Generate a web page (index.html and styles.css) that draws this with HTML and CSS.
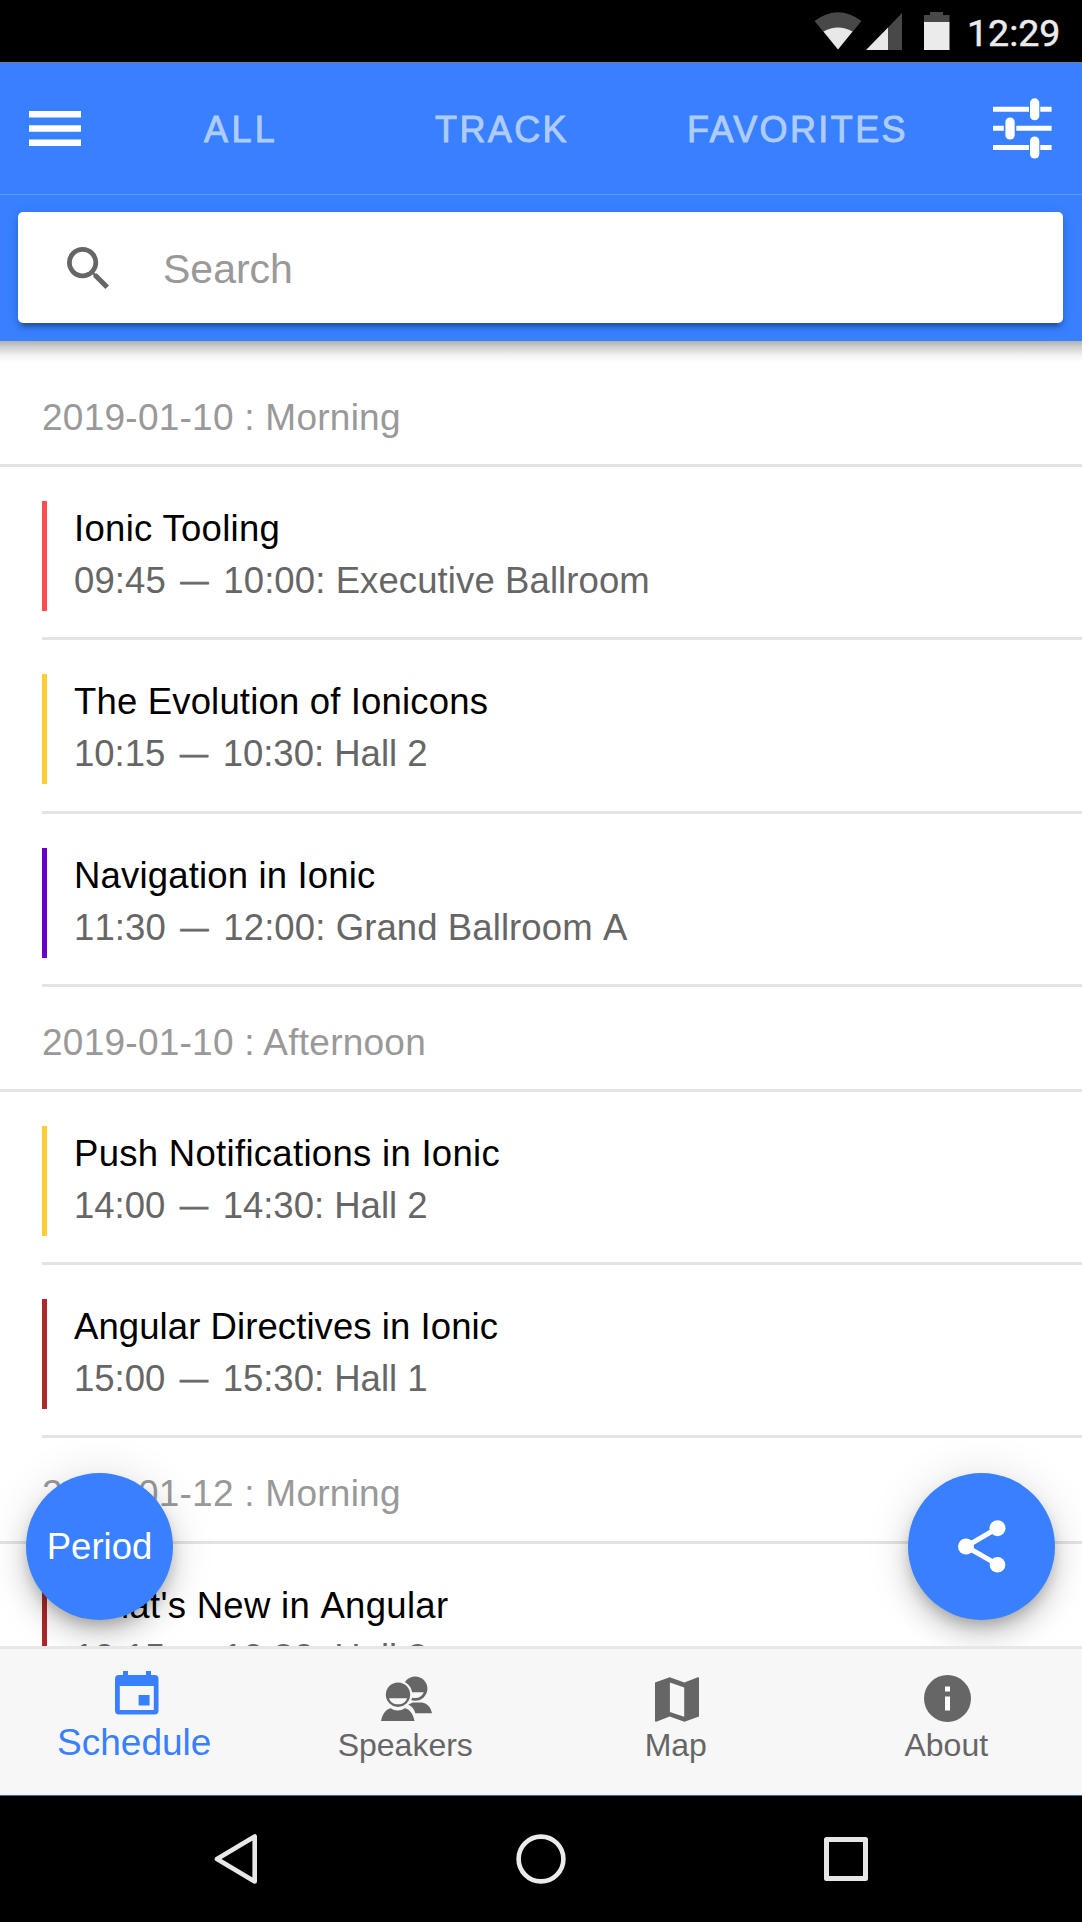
FILE: index.html
```html
<!DOCTYPE html>
<html lang="en">
<head>
<meta charset="utf-8">
<title>Schedule</title>
<link rel="stylesheet" href="styles.css">
</head>
<body>
<div class="phone">
  <div class="status">
    <svg class="status-icons" width="138" height="62" viewBox="814 0 138 62">
      <path fill="#484848" d="M814.500 21Q838 3.500 861.500 21L838 49.500Z"/>
      <path fill="#e8e8e8" d="M823.500 31.500Q838 23.500 852.500 31.500L838 49.500Z"/>
      <path fill="#484848" d="M888 27.500L902 13V50H888Z"/>
      <path fill="#e8e8e8" d="M866 50L888 27.500V50Z"/>
      <path fill="#484848" d="M924 15h6v-3h13v3h6.500v7H924Z"/>
      <path fill="#ebebeb" d="M924 22h25.500v28H924Z"/>
    </svg>
    <span class="clock">12:29</span>
  </div>
  <header class="header">
    <nav class="toolbar">
      <svg class="menu" width="52" height="35" viewBox="0 0 52 35" fill="#fff"><path d="M0 0h52v6.500H0zM0 14.200h52v6.500H0zM0 28.400h52v6.500H0z"/></svg>
      <div class="segments">
        <span class="seg seg-all">ALL</span>
        <span class="seg seg-track">TRACK</span>
        <span class="seg seg-fav">FAVORITES</span>
      </div>
      <svg class="options" width="59" height="61" viewBox="0 0 59 61" fill="#fff">
        <path d="M0 8.700h36v5H0zM47.300 8.700H58.600v5H47.300zM0 27.800h10.800v5H0zM23.300 27.800h35.300v5H23.300zM0 46.900h36v5H0zM47.300 46.900H58.600v5H47.300z"/>
        <rect x="37" y=".3" width="9.300" height="22" rx="4.600"/><rect x="12.400" y="19.500" width="9.300" height="22" rx="4.600"/><rect x="37" y="38.500" width="9.300" height="22" rx="4.600"/>
      </svg>
    </nav>
    <div class="search-bar">
      <div class="search">
        <svg width="42" height="42" viewBox="3 3 17.500 17.500" fill="#666"><path d="M15.500 14h-.79l-.28-.27A6.470 6.470 0 0 0 16 9.500 6.500 6.500 0 1 0 9.500 16c1.610 0 3.090-.59 4.230-1.570l.27.28v.79l5 4.990L20.490 19l-4.990-5zm-6 0a4.500 4.500 0 1 1 0-9 4.500 4.500 0 0 1 0 9z"/></svg>
        <span class="placeholder">Search</span>
      </div>
    </div>
  </header>
  <main class="content">
    <section class="list">
      <h2 class="group">2019-01-10 : Morning</h2>
      <article class="item"><div class="session red"><h3 class="tight">Ionic Tooling</h3><p class="long">09:45 <i>—</i> 10:00: Executive Ballroom</p></div></article>
      <article class="item"><div class="session yellow"><h3>The Evolution of Ionicons</h3><p>10:15 <i>—</i> 10:30: Hall 2</p></div></article>
      <article class="item"><div class="session purple"><h3>Navigation in Ionic</h3><p class="long">11:30 <i>—</i> 12:00: Grand Ballroom A</p></div></article>
      <h2 class="group">2019-01-10 : Afternoon</h2>
      <article class="item"><div class="session yellow"><h3 class="wide">Push Notifications in Ionic</h3><p>14:00 <i>—</i> 14:30: Hall 2</p></div></article>
      <article class="item"><div class="session brown"><h3 class="tight">Angular Directives in Ionic</h3><p>15:00 <i>—</i> 15:30: Hall 1</p></div></article>
      <h2 class="group">2019-01-12 : Morning</h2>
      <article class="item"><div class="session brown"><h3 class="wide">What's New in Angular</h3><p>10:15 <i>—</i> 10:30: Hall 2</p></div></article>
    </section>
    <div class="fab fab-left">Period</div>
    <div class="fab fab-right">
      <svg width="48" height="53" viewBox="0 0 48 53" fill="#fff" stroke="#fff"><path fill="none" stroke-width="5" d="M39.500 8.200L8 26.500l31.500 18.200"/><g stroke="none"><circle cx="8" cy="26.500" r="8"/><circle cx="39.500" cy="8.200" r="8"/><circle cx="39.500" cy="44.700" r="7.800"/></g></svg>
    </div>
  </main>
  <footer class="tabs">
    <div class="tab active">
      <svg width="44" height="44" viewBox="0 0 44 44" fill="#3880ff"><path fill-rule="evenodd" d="M8 0h5v4h18V0h5v4h3.500a4 4 0 0 1 4 4v31.500a4 4 0 0 1-4 4H4a4 4 0 0 1-4-4V8a4 4 0 0 1 4-4h4zM4.800 15v24h34V15zM23.600 24h11v10.500h-11z"/></svg>
      <span>Schedule</span>
    </div>
    <div class="tab">
      <svg width="51" height="46" viewBox="0 0 51 46" fill="#666">
        <circle cx="34.200" cy="12.600" r="12.200"/><path fill="#f7f7f7" d="M24 16.300h18.800c-1.500 3.700-4.500 5.800-8.600 5.800-4 0-8-1-10.200-5.800z"/><path d="M26 37.200V29l6-2.500h9c5.500 1 8.500 4.500 10 10.700z"/>
        <circle cx="17" cy="18.700" r="14.300" fill="#f7f7f7"/><path fill="#f7f7f7" d="M22 31l5-2.500c4.500 2 6.500 5.500 7.500 9.500H26z"/>
        <circle cx="17" cy="18.700" r="12.200"/><path fill="#f7f7f7" d="M8 22.200h18c-1.300 4-4.500 6-9 6s-7.700-2-9-6z"/><path d="M0 45c1.500-7 5-12 10-12.700 2 1.500 4 2.200 6.700 2.200s5-.7 7-2.200C28.700 33 32 38 33.600 45z"/>
      </svg>
      <span>Speakers</span>
    </div>
    <div class="tab">
      <svg width="44" height="45" viewBox="0 0 44 45" fill="#666"><path fill-rule="evenodd" d="M14.700.3L0 5.400V44q0 1 1.200.8l13.500-5.200 14.700 5.100L44 39.600V1q0-1-1.200-.8L29.400 5.400zM14.900 5.600v29.300l14.300 4.900V10.500z"/></svg>
      <span>Map</span>
    </div>
    <div class="tab">
      <svg width="47" height="47" viewBox="0 0 47 47"><circle cx="23.500" cy="23.500" r="23.500" fill="#666"/><path fill="#fff" d="M21 11.500h5v5h-5zM21 21.500h5V35.500h-5z"/></svg>
      <span>About</span>
    </div>
  </footer>
  <div class="navbar">
    <svg width="44" height="52" viewBox="0 0 44 52" fill="none" stroke="#e8e8e8" stroke-width="4.600" stroke-linejoin="round"><path d="M40.700 3.500v45L3 26z"/></svg>
    <svg width="50" height="50" viewBox="0 0 50 50" fill="none" stroke="#ebebeb" stroke-width="4.600"><circle cx="25" cy="25" r="22.400"/></svg>
    <svg width="44" height="46" viewBox="0 0 44 46" fill="none" stroke="#e6e6e6" stroke-width="5" stroke-linejoin="round"><path d="M2.500 3.500h39v39h-39z"/></svg>
  </div>
</div>
</body>
</html>
```
FILE: styles.css
```css
* { box-sizing: border-box; }
body { margin: 0; font-family: "Liberation Sans", Arial, sans-serif; background: #000; }
svg { display: block; flex: none; }
h2, h3, p { margin: 0; font-weight: 400; }
.phone { width: 1082px; height: 1922px; display: flex; flex-direction: column; overflow: hidden; background: #fff; }

.status { height: 63px; flex: none; background: #000; border-bottom: 1px solid #7d7d7d; display: flex; align-items: center; padding-left: 814px; }
.clock { margin-left: 15px; padding-top: 5px; font: 400 37.500px/1 Roboto, sans-serif; color: #ebebeb; -webkit-text-stroke: .5px #ebebeb; }

.header { height: 278px; flex: none; background: #3880ff; display: flex; flex-direction: column; position: relative; z-index: 1; }
.toolbar { height: 132px; border-bottom: 1px solid #5f99ff; display: flex; align-items: center; padding: 0 30px 0 29px; }
.segments { flex: 1; display: flex; padding-top: 2px; color: #afccff; font-size: 36px; line-height: 42px; -webkit-text-stroke: .9px #afccff; }
.seg { letter-spacing: 2.400px; white-space: nowrap; }
.seg-all { margin-left: 123px; width: 231px; letter-spacing: 3.400px; }
.seg-track { width: 252px; }
.search-bar { flex: 1; padding: 17px 19px 18px 18px; display: flex; }
.search { flex: 1; background: #fff; border-radius: 5px; display: flex; align-items: center; padding-left: 49px; box-shadow: 0 5px 5px rgba(0,0,0,.14), 0 8px 3px -5px rgba(0,0,0,.2), 0 3px 13px rgba(0,0,0,.12); }
.search svg { margin-top: 1px; }
.placeholder { margin-left: 54px; padding-top: 3px; font-size: 41px; color: #999; }

.content { height: 1305px; flex: none; position: relative; overflow: hidden; background: linear-gradient(#b0b0b0, #d0d0d0 6px, #f4f4f4 15px, #fff 22px); }
.list { padding-top: 21px; }
.group { height: 105.200px; padding: 34px 0 0 42px; border-bottom: 3px solid #e3e3e3; font-size: 37px; line-height: 44px; letter-spacing: .25px; color: #999; }
.item { height: 173.200px; margin-left: 42px; padding-top: 34px; border-bottom: 3px solid #e4e4e4; }
.session { height: 110px; padding: 7px 0 0 27px; border-left: 5px solid; font-kerning: none; }
.session h3, .session p { font-size: 36.500px; white-space: nowrap; }
.session h3 { height: 52px; line-height: 42px; letter-spacing: .17px; color: #000; }
.session .wide { letter-spacing: .3px; }
.session .tight { letter-spacing: .08px; }
.red .tight { font-kerning: normal; letter-spacing: .3px; }
.session p { line-height: 42px; color: #666; }
.session .long { letter-spacing: .1px; }
.session i { display: inline-block; width: 37px; text-align: center; font-size: 28px; line-height: 28px; font-style: normal; vertical-align: 3px; -webkit-text-stroke: .8px #666; }
.red { border-color: #ff4c52; }
.yellow { border-color: #ffce36; }
.purple { border-color: #6600cc; }
.brown { border-color: #ac282b; }

.fab { position: absolute; top: 1132px; width: 147px; height: 147px; border-radius: 50%; background: #3880ff; color: #fff; font-size: 36.500px; display: flex; align-items: center; justify-content: center; box-shadow: 0 8px 13px -3px rgba(0,0,0,.2), 0 16px 26px rgba(0,0,0,.14), 0 3px 47px rgba(0,0,0,.12); }
.fab-left { left: 26px; }
.fab-right { left: 908px; }

.tabs { height: 150px; flex: none; background: #f7f7f7; border-top: 3px solid #e7e7e7; border-bottom: 1px solid #3068cc; display: grid; grid-template-columns: repeat(4, 1fr); }
.tab { height: 146px; padding: 0 1px 31px 0; display: flex; flex-direction: column; align-items: center; justify-content: flex-end; color: #666; font-size: 32px; line-height: 38px; }
.tab svg { margin: 0 0 4px 3px; }
.active { color: #3880ff; font-size: 37px; line-height: 42px; padding: 0 2px 31px 0; }
.active svg { margin-bottom: 7px; margin-left: 5px; }

.navbar { flex: 1; background: #000; display: flex; align-items: center; justify-content: space-between; padding: 0 214px; }
```
